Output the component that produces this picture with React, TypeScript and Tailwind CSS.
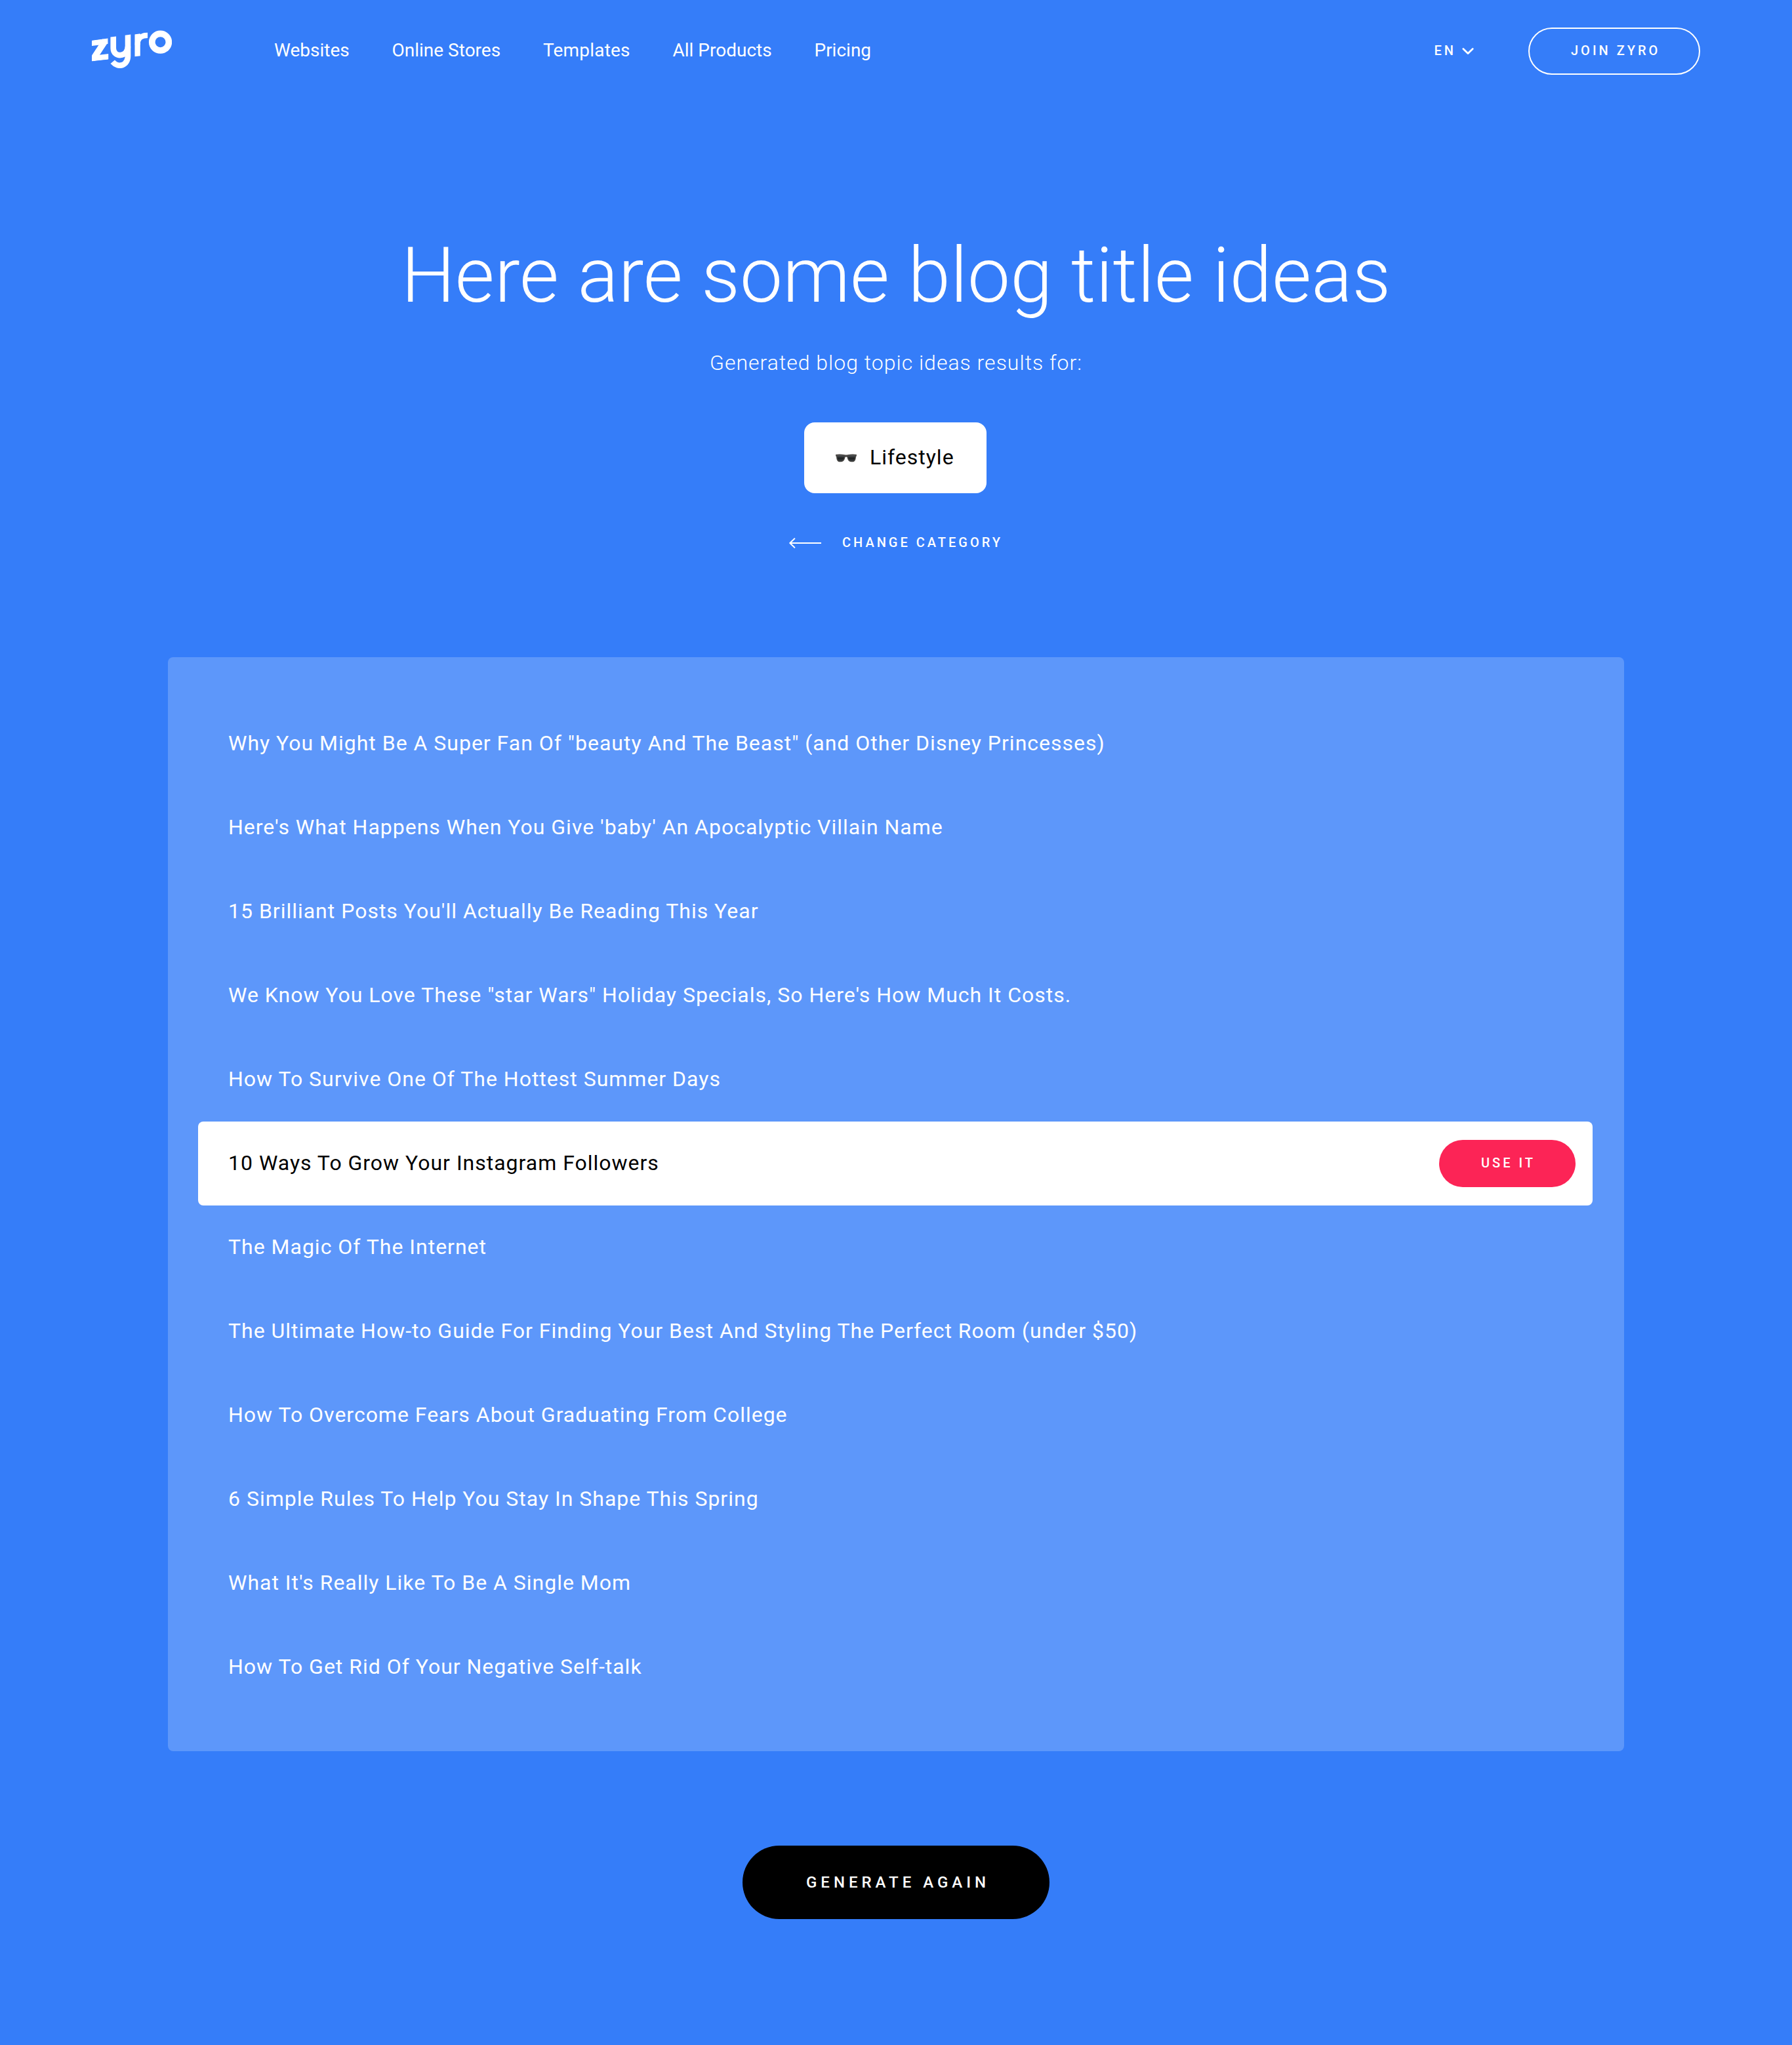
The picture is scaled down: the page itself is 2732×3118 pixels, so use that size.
const navItems = [
  { label: 'Websites', className: '' },
  { label: 'Online Stores', className: '' },
  { label: 'Templates', className: 'tracking-[0.2px]' },
  { label: 'All Products', className: '' },
  { label: 'Pricing', className: '' },
];

const titles = [
  'Why You Might Be A Super Fan Of "beauty And The Beast" (and Other Disney Princesses)',
  "Here's What Happens When You Give 'baby' An Apocalyptic Villain Name",
  "15 Brilliant Posts You'll Actually Be Reading This Year",
  'We Know You Love These "star Wars" Holiday Specials, So Here\'s How Much It Costs.',
  'How To Survive One Of The Hottest Summer Days',
  '10 Ways To Grow Your Instagram Followers',
  'The Magic Of The Internet',
  'The Ultimate How-to Guide For Finding Your Best And Styling The Perfect Room (under $50)',
  'How To Overcome Fears About Graduating From College',
  '6 Simple Rules To Help You Stay In Shape This Spring',
  "What It's Really Like To Be A Single Mom",
  'How To Get Rid Of Your Negative Self-talk',
];

const activeTitle = 5;

function Logo() {
  return (
    <svg className="h-[58px] w-[122px]" viewBox="60 47.5 367 174" fill="none" stroke="#fff" aria-label="zyro">
      <defs>
        <clipPath id="z-clip">
          <path d="M60 94 L133.5 83.5 V140 H136 V182 L60 190 Z" />
        </clipPath>
        <clipPath id="y-clip">
          <path d="M140 79.5 L190 73.5 L240 67 V225 H140 Z" />
        </clipPath>
        <clipPath id="r-clip">
          <path d="M255 67 L283 63 V67 C290 60 300 57 316 57.5 V84 L283 100 V165.5 L255 168.5 Z" />
        </clipPath>
      </defs>
      <g clipPath="url(#z-clip)">
        <path d="M50 108.5 L140 96.500" strokeWidth="25" />
        <path d="M50 178.500 L145 167.500" strokeWidth="26" />
        <path d="M122 95 L70 174" strokeWidth="29" />
      </g>
      <g clipPath="url(#y-clip)">
        <path d="M158.500 60 V130 C158.500 175 225.500 172 225.500 122" strokeWidth="26" />
        <path d="M225.500 55 V164 C225.500 211 181 222 155.500 192.500" strokeWidth="26" />
      </g>
      <g clipPath="url(#r-clip)">
        <path d="M269.500 50 V180" strokeWidth="25" />
        <path d="M270 114 C270 82 287 70 320 70.500" strokeWidth="25" />
      </g>
      <circle cx="374.500" cy="102" r="38.500" strokeWidth="29" />
    </svg>
  );
}

function Sunglasses() {
  return (
    <svg className="h-[13px] w-8" viewBox="0 0 32 13">
      <defs>
        <linearGradient id="lens" x1="0" y1="0" x2="0" y2="1">
          <stop offset="0" stopColor="#55585a" />
          <stop offset="0.5" stopColor="#1d2021" />
          <stop offset="1" stopColor="#3c4042" />
        </linearGradient>
      </defs>
      <path
        d="M0 1 Q6 -0.300 13.500 1.200 Q16 1.800 18.500 1.200 Q26 -0.300 32 1 L31.700 3.800 L31 4.200 C30.600 9 29.600 12.300 25.500 12.300 C20.500 12.300 18.600 10.500 17.500 5.200 Q16 3.600 14.500 5.200 C13.400 10.500 11.500 12.300 6.500 12.300 C2.400 12.300 1.400 9 1 4.200 L0.300 3.800 Z"
        fill="#4a4845"
      />
      <path d="M2.200 2.600 Q8 1.300 13.300 3 C13 8.500 10.500 11.300 6.700 11.300 C3.300 11.300 2.600 8.500 2.200 2.600 Z" fill="url(#lens)" />
      <path d="M29.800 2.600 Q24 1.300 18.700 3 C19 8.500 21.500 11.300 25.300 11.300 C28.700 11.300 29.400 8.500 29.800 2.600 Z" fill="url(#lens)" />
    </svg>
  );
}

export default function App() {
  return (
    <div className="min-h-[3118px] w-full bg-[#357df9] font-['Roboto',sans-serif] text-white">
      <header className="flex h-[156px] items-center px-[140px]">
        <a className="-mt-1.5 block w-[122px]">
          <Logo />
        </a>
        <nav className="ml-[156px] flex gap-[64.8px] pb-[3px] text-[28px] leading-[33px] whitespace-nowrap">
          {navItems.map((item) => (
            <a key={item.label} className={item.className}>
              {item.label}
            </a>
          ))}
        </nav>
        <div className="ml-auto flex items-center text-[20px] leading-6 font-medium tracking-[4px]">
          <button className="flex items-center gap-2">
            <span className="pb-0.5">EN</span>
            <svg className="h-3 w-5" viewBox="0 0 20 12" fill="none" stroke="#fff" strokeWidth="2.800" strokeLinecap="round" strokeLinejoin="round">
              <path d="M2.800 2.500 L10 9.500 L17.200 2.500" />
            </svg>
          </button>
          <button className="ml-[82px] flex h-[72px] w-[262px] items-center rounded-full border-2 border-white pb-0.5 pl-[63px] whitespace-nowrap">
            JOIN ZYRO
          </button>
        </div>
      </header>

      <main className="flex flex-col items-center">
        <h1 className="mt-[194px] text-[116px] leading-[140px] font-light tracking-[0.08px] whitespace-nowrap">
          Here are some blog title ideas
        </h1>
        <p className="mt-[39px] text-[32px] leading-[48px] font-light tracking-[1px]">
          Generated blog topic ideas results for:
        </p>
        <div className="mt-[67px] mr-0.5 flex h-[108px] w-[278px] items-center gap-5 rounded-2xl bg-white pl-12 text-black">
          <Sunglasses />
          <span className="pb-0.5 text-[32px] leading-[38px] tracking-[1px]">Lifestyle</span>
        </div>
        <a className="mt-[59px] flex h-8 items-center gap-8 text-[20px] leading-8 font-medium tracking-[4px]">
          <svg className="mt-0.5 h-4 w-[49px]" viewBox="0 0 49 16" fill="none" stroke="#fff" strokeWidth="2">
            <path d="M1 8 H49" />
            <path d="M8.300 1.300 L1.300 8 L8.300 14.700" strokeLinecap="round" strokeLinejoin="round" />
          </svg>
          CHANGE CATEGORY
        </a>

        <ul className="mt-[159px] w-[2220px] rounded-lg bg-white/20 pt-[68px] pr-12 pb-16 pl-[46px]">
          {titles.map((title, index) => (
            <li
              key={title}
              className={
                index === activeTitle
                  ? 'flex h-32 items-center justify-between rounded-lg bg-white pr-[26px] pl-[46px] text-black'
                  : 'flex h-32 items-center justify-between pr-[26px] pl-[46px]'
              }
            >
              <span className="pb-0.5 text-[32px] leading-[38px] tracking-[0.99px] whitespace-nowrap">{title}</span>
              {index === activeTitle && (
                <button className="flex h-[72px] w-[208px] items-center rounded-full bg-[#fc2456] pb-0.5 pl-16 text-[20px] leading-6 font-medium tracking-[4px] whitespace-nowrap text-white">
                  USE IT
                </button>
              )}
            </li>
          ))}
        </ul>

        <button className="mt-36 flex h-28 w-[468px] items-center rounded-full bg-black pl-[97px] text-[24px] leading-7 font-medium tracking-[6px] whitespace-nowrap">
          GENERATE AGAIN
        </button>
      </main>
    </div>
  );
}
